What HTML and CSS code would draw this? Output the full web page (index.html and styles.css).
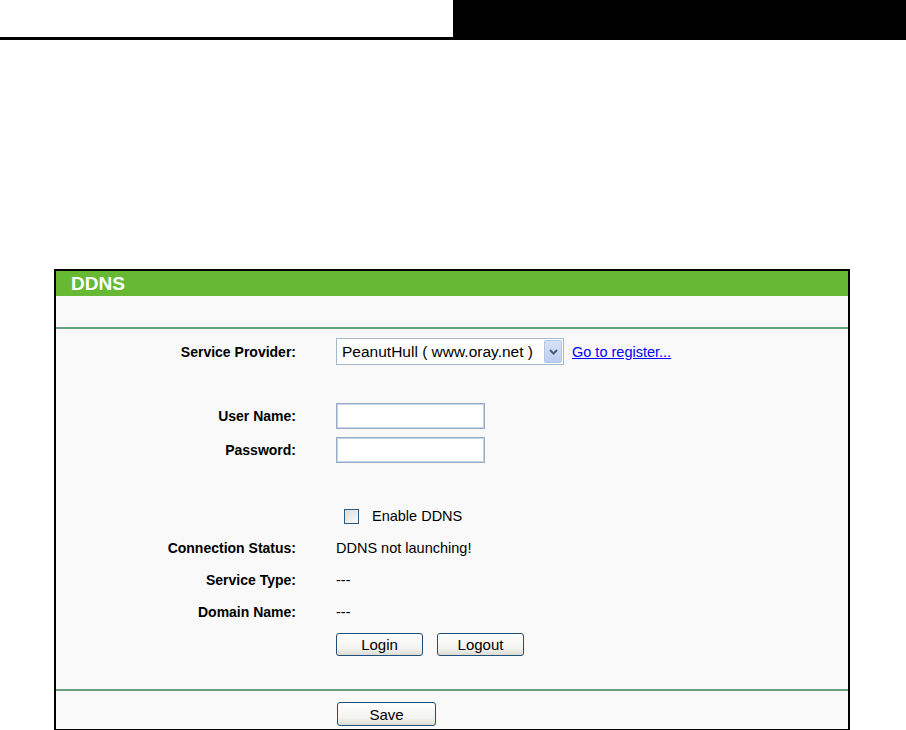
FILE: index.html
```html
<!DOCTYPE html>
<html>
<head>
<meta charset="utf-8">
<link rel="stylesheet" href="styles.css">
</head>
<body>
<div class="topbar">
  <div class="topbar-left"></div>
  <div class="topbar-right"></div>
</div>
<div class="panel">
  <div class="panel-title">DDNS</div>
  <div class="panel-strip"></div>
  <div class="panel-body">
    <div class="row row-provider">
      <div class="label">Service Provider:</div>
      <div class="value">
        <div class="select">
          <span class="select-text">PeanutHull ( www.oray.net )</span>
          <span class="select-btn">
            <svg width="9" height="6" viewBox="0 0 9 6"><path d="M1 1 L4.5 4.5 L8 1" fill="none" stroke="#4a5a78" stroke-width="2"/></svg>
          </span>
        </div>
        <a class="link" href="#">Go to register...</a>
      </div>
    </div>
    <div class="row row-user">
      <div class="label">User Name:</div>
      <div class="value"><div class="input"></div></div>
    </div>
    <div class="row row-pass">
      <div class="label">Password:</div>
      <div class="value"><div class="input"></div></div>
    </div>
    <div class="row row-text row-enable">
      <div class="label"></div>
      <div class="value"><span class="checkbox"></span><span class="check-label">Enable DDNS</span></div>
    </div>
    <div class="row row-text">
      <div class="label">Connection Status:</div>
      <div class="value">DDNS not launching!</div>
    </div>
    <div class="row row-text">
      <div class="label">Service Type:</div>
      <div class="value">---</div>
    </div>
    <div class="row row-text">
      <div class="label">Domain Name:</div>
      <div class="value">---</div>
    </div>
    <div class="row row-buttons">
      <div class="label"></div>
      <div class="value"><span class="btn">Login</span><span class="btn btn-gap">Logout</span></div>
    </div>
  </div>
  <div class="panel-footer">
    <span class="btn btn-save">Save</span>
  </div>
</div>
</body>
</html>
```
FILE: styles.css
```css
html, body {
  margin: 0;
  padding: 0;
  background: #ffffff;
  font-family: "Liberation Sans", Arial, sans-serif;
  color: #000;
}
.topbar {
  display: flex;
  height: 40px;
}
.topbar-left {
  width: 453px;
  height: 37px;
  border-bottom: 3px solid #000;
}
.topbar-right {
  flex: 1;
  background: #000;
}
.panel {
  margin: 229px 0 0 54px;
  width: 792px;
  height: 458px;
  border: 2px solid #000;
  background: #f9f9f9;
}
.panel-title {
  height: 25px;
  background: #67b934;
  color: #fff;
  font-size: 19px;
  font-weight: bold;
  line-height: 25px;
  padding-left: 15px;
  box-sizing: border-box;
}
.panel-strip {
  height: 31px;
  border-bottom: 2px solid #67a07e;
}
.panel-body {
  height: 362px;
  padding-top: 9px;
  box-sizing: border-box;
  border-bottom: 2px solid #67a07e;
}
.row {
  display: flex;
  align-items: center;
}
.label {
  width: 240px;
  text-align: right;
  font-weight: bold;
  font-size: 14px;
  flex: none;
}
.value {
  margin-left: 40px;
  display: flex;
  align-items: center;
  font-size: 14.5px;
}
.row-provider { height: 27px; }
.row-user { height: 26px; margin-top: 38px; }
.row-pass { height: 26px; margin-top: 8px; }
.row-text { height: 24px; margin-top: 8px; }
.row-enable { margin-top: 41px; }
.row-buttons { height: 23px; margin-top: 9px; }

.select {
  width: 228px;
  height: 27px;
  box-sizing: border-box;
  border: 1px solid #a5b9d0;
  background: #fff;
  display: flex;
  align-items: center;
  justify-content: space-between;
  padding: 1px 1px 1px 5px;
}
.select-text {
  font-size: 15.5px;
}
.select-btn {
  width: 18px;
  height: 23px;
  box-sizing: border-box;
  border: 1px solid #b4c6e6;
  border-radius: 2px;
  background: linear-gradient(#d6e2f7, #bccdef);
  display: flex;
  align-items: center;
  justify-content: center;
}
.link {
  margin-left: 8px;
  color: #0000ff;
  text-decoration: underline;
  font-size: 14.5px;
}
.input {
  width: 149px;
  height: 26px;
  box-sizing: border-box;
  border: 1px solid #97acc6;
  box-shadow: inset 0 0 0 1px #c6d3e3;
  background: #fff;
}
.checkbox {
  width: 15px;
  height: 15px;
  box-sizing: border-box;
  margin-left: 8px;
  border: 1px solid #2c5a87;
  background: linear-gradient(135deg, #dcdcd6, #fbfbfb);
}
.check-label {
  margin-left: 13px;
}
.btn {
  display: inline-flex;
  align-items: center;
  justify-content: center;
  width: 87px;
  height: 23px;
  box-sizing: border-box;
  border: 1px solid #1f4f7d;
  border-radius: 3px;
  background: linear-gradient(#ffffff, #f2f2ee 70%, #dcdcd3);
  font-size: 15px;
  color: #000;
}
.btn-gap { margin-left: 14px; }
.panel-footer {
  padding: 11px 0 0 281px;
}
.btn-save {
  width: 99px;
  height: 24px;
}
```
